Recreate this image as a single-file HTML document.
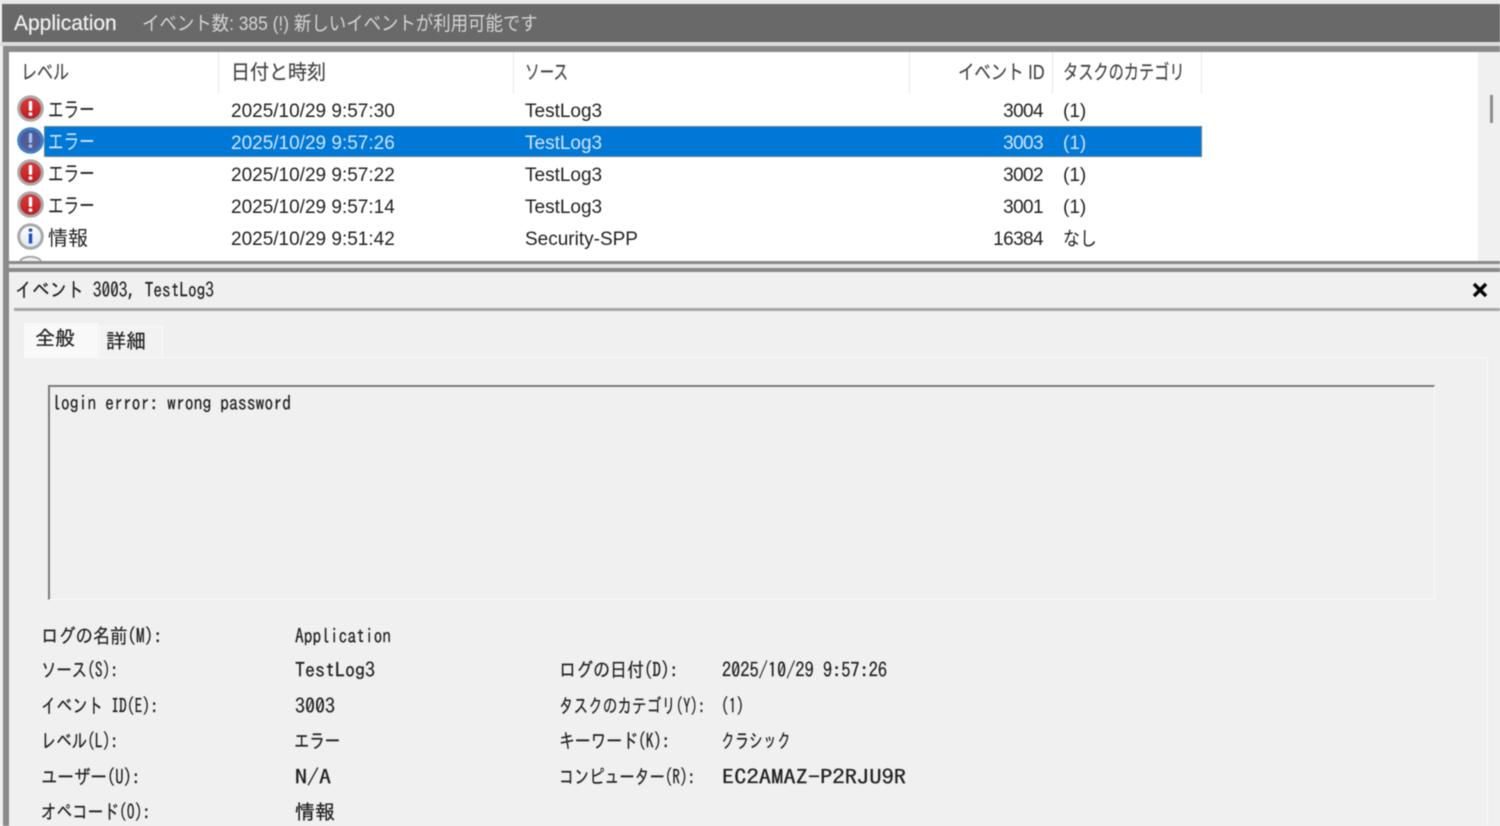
<!DOCTYPE html>
<html lang="ja"><head><meta charset="utf-8"><title>Application</title>
<style>
html,body{margin:0;padding:0;width:1500px;height:826px;overflow:hidden;background:#f0f0f0}
#r{position:relative;width:1500px;height:826px;overflow:hidden;filter:blur(.45px);font-family:"Liberation Sans","Noto Sans CJK JP",sans-serif;color:#222}
.b{position:absolute}
.t{position:absolute;white-space:nowrap;font-size:19px;line-height:24px;letter-spacing:0;transform-origin:0 50%}
.g{font-family:"IPAGothic","Liberation Sans",sans-serif;font-size:20px;line-height:24px;letter-spacing:0;color:#222;-webkit-text-stroke:.25px #222}
.w{color:#cfe4fa}
.h{color:#444;font-size:20px;-webkit-text-stroke:.2px #444}
.r{text-align:right;width:100px;letter-spacing:-.6px}
.e{transform:scaleX(.74)}
svg{position:absolute;overflow:visible}
</style></head><body><div id="r">
<div class="b" style="left:0;top:0;width:1500px;height:4px;background:#e8e8e8"></div>
<div class="b" style="left:2px;top:4px;width:1498px;height:38px;background:#696969"></div>
<div class="b" style="left:0;top:42px;width:1500px;height:4px;background:#dcdcdc"></div>
<div class="b" style="left:3px;top:46px;width:1497px;height:6px;background:#8a8a8a"></div>
<div class="b" style="left:3px;top:46px;width:6px;height:780px;background:#8a8a8a"></div>
<div class="b" style="left:9px;top:52px;width:1469px;height:209px;background:#fff"></div>
<div class="b" style="left:1478px;top:52px;width:22px;height:209px;background:#f0f0f0"></div>
<div class="b" style="left:1490px;top:95px;width:3px;height:28px;background:#8e8e8e"></div>
<div class="b" style="left:218px;top:52px;width:1px;height:41px;background:#e6e6e6"></div>
<div class="b" style="left:513px;top:52px;width:1px;height:41px;background:#e6e6e6"></div>
<div class="b" style="left:909px;top:52px;width:1px;height:41px;background:#e6e6e6"></div>
<div class="b" style="left:1052px;top:52px;width:1px;height:41px;background:#e6e6e6"></div>
<div class="b" style="left:1201px;top:52px;width:1px;height:41px;background:#e6e6e6"></div>
<div class="b" style="left:9px;top:261px;width:1491px;height:3px;background:#8a8a8a"></div>
<div class="b" style="left:9px;top:264px;width:1491px;height:4px;background:#e4e4e4"></div>
<div class="b" style="left:9px;top:268px;width:1491px;height:4px;background:#8a8a8a"></div>
<div class="b" style="left:44px;top:126px;width:1158px;height:31px;background:#0078d7;outline:1px dotted #c98a3a;outline-offset:-1px"></div>

<div class="t" style="left:14px;top:12px;color:#f0f0f0;font-size:21px;-webkit-text-stroke:.2px #f0f0f0">Application</div>
<div class="t" style="left:142px;top:12px;color:#d4d4d4;font-size:19.5px;transform:scaleX(.893)">イベント数: 385 (!) 新しいイベントが利用可能です</div>

<div class="t h" style="left:21px;top:61px;transform:scaleX(.8)">レベル</div>
<div class="t h" style="left:231px;top:61px;transform:scaleX(.95)">日付と時刻</div>
<div class="t h" style="left:525px;top:61px;transform:scaleX(.73)">ソース</div>
<div class="t h" style="left:958px;top:61px;transform:scaleX(.82)">イベント ID</div>
<div class="t h" style="left:1063px;top:61px;transform:scaleX(.76)">タスクのカテゴリ</div>

<svg style="left:0;top:0" width="60" height="270" viewBox="0 0 60 270">
<defs><linearGradient id="e" x1="0" y1="0" x2="0" y2="1"><stop offset="0" stop-color="#dc3c3e"/><stop offset="1" stop-color="#b81c20"/></linearGradient>
<linearGradient id="s" x1="0" y1="0" x2="0" y2="1"><stop offset="0" stop-color="#4a5a9c"/><stop offset="1" stop-color="#5a5f95"/></linearGradient>
<linearGradient id="n" x1="0" y1="0" x2="0" y2="1"><stop offset="0" stop-color="#fff"/><stop offset="1" stop-color="#dfe6f2"/></linearGradient></defs>
<circle cx="30.500" cy="108.500" r="11.800" fill="url(#e)" stroke="#a8a8a8" stroke-width="3"/><rect x="28.800" y="101" width="3.400" height="10" rx="1.500" fill="#fff"/><rect x="28.800" y="112.500" width="3.400" height="3.200" fill="#fff"/>
<circle cx="30.500" cy="140.500" r="11.800" fill="url(#s)" stroke="#3f7fc8" stroke-width="3"/><rect x="28.800" y="133" width="3.400" height="10" rx="1.500" fill="#9fc4ea"/><rect x="28.800" y="144.500" width="3.400" height="3.200" fill="#9fc4ea"/>
<circle cx="30.500" cy="172.500" r="11.800" fill="url(#e)" stroke="#a8a8a8" stroke-width="3"/><rect x="28.800" y="165" width="3.400" height="10" rx="1.500" fill="#fff"/><rect x="28.800" y="176.500" width="3.400" height="3.200" fill="#fff"/>
<circle cx="30.500" cy="204.500" r="11.800" fill="url(#e)" stroke="#a8a8a8" stroke-width="3"/><rect x="28.800" y="197" width="3.400" height="10" rx="1.500" fill="#fff"/><rect x="28.800" y="208.500" width="3.400" height="3.200" fill="#fff"/>
<circle cx="30.500" cy="236.500" r="11.800" fill="url(#n)" stroke="#a8a8a8" stroke-width="3"/><rect x="28.800" y="228.500" width="3.400" height="3.200" fill="#1c50b8"/><rect x="28.800" y="233.500" width="3.400" height="10" fill="#1c50b8"/>
<path d="M20 261a11 6 0 0 1 21 0" fill="#f2f2f2" stroke="#a8a8a8" stroke-width="2"/>
</svg>

<div class="t e" style="left:48px;top:99px;color:#222;font-size:21px">エラー</div>
<div class="t" style="left:231px;top:100px">2025/10/29 9:57:30</div>
<div class="t" style="left:525px;top:100px">TestLog3</div>
<div class="t r" style="left:943px;top:100px">3004</div>
<div class="t" style="left:1063px;top:100px">(1)</div>

<div class="t e w" style="left:48px;top:131px;font-size:21px">エラー</div>
<div class="t w" style="left:231px;top:132px">2025/10/29 9:57:26</div>
<div class="t w" style="left:525px;top:132px">TestLog3</div>
<div class="t w r" style="left:943px;top:132px">3003</div>
<div class="t w" style="left:1063px;top:132px">(1)</div>

<div class="t e" style="left:48px;top:163px;font-size:21px">エラー</div>
<div class="t" style="left:231px;top:164px">2025/10/29 9:57:22</div>
<div class="t" style="left:525px;top:164px">TestLog3</div>
<div class="t r" style="left:943px;top:164px">3002</div>
<div class="t" style="left:1063px;top:164px">(1)</div>

<div class="t e" style="left:48px;top:195px;font-size:21px">エラー</div>
<div class="t" style="left:231px;top:196px">2025/10/29 9:57:14</div>
<div class="t" style="left:525px;top:196px">TestLog3</div>
<div class="t r" style="left:943px;top:196px">3001</div>
<div class="t" style="left:1063px;top:196px">(1)</div>

<div class="t" style="left:48px;top:227px;font-size:20px">情報</div>
<div class="t" style="left:231px;top:228px">2025/10/29 9:51:42</div>
<div class="t" style="left:525px;top:228px">Security-SPP</div>
<div class="t r" style="left:943px;top:228px">16384</div>
<div class="t" style="left:1063px;top:228px;transform:scaleX(.89)">なし</div>

<div class="t g" style="left:15px;top:278px;transform:scaleX(.865)">イベント 3003, TestLog3</div>
<svg style="left:1472px;top:282px" width="16" height="16" viewBox="0 0 16 16"><path d="M2 2L14 14M14 2L2 14" stroke="#000" stroke-width="3.400"/></svg>
<div class="b" style="left:14px;top:308px;width:1486px;height:3px;background:#a6a6a6"></div>

<div class="b" style="left:28px;top:357px;width:1460px;height:469px;border-top:1px solid #f9f9f9;border-right:1px solid #f9f9f9;box-sizing:border-box"></div>
<div class="b" style="left:24px;top:323px;width:74px;height:35px;background:#f9f9f9"></div>
<div class="b" style="left:99px;top:326px;width:64px;height:30px;background:#f2f2f2;border:1px solid #f9f9f9;border-bottom:0;box-sizing:border-box"></div>
<div class="t g" style="left:35px;top:326px">全般</div>
<div class="t g" style="left:106px;top:329px">詳細</div>

<div class="b" style="left:48px;top:385px;width:1387px;height:215px;box-sizing:border-box;border-top:2px solid #7a7a7a;border-left:2px solid #7a7a7a;border-right:1px solid #fafafa;border-bottom:1px solid #fafafa"></div>
<div class="t g" style="left:52px;top:391px;transform:scaleX(.885)">login error: wrong password</div>

<div class="t g" style="left:41px;top:624px;transform:scaleX(.864)">ログの名前(M):</div>
<div class="t g" style="left:295px;top:624px;transform:scaleX(.873)">Application</div>
<div class="t g" style="left:41px;top:658px;transform:scaleX(.77)">ソース(S):</div>
<div class="t g" style="left:295px;top:658px">TestLog3</div>
<div class="t g" style="left:41px;top:694px;transform:scaleX(.78)">イベント ID(E):</div>
<div class="t g" style="left:295px;top:694px">3003</div>
<div class="t g" style="left:41px;top:729px;transform:scaleX(.77)">レベル(L):</div>
<div class="t g" style="left:294px;top:729px;transform:scaleX(.77)">エラー</div>
<div class="t g" style="left:41px;top:765px;transform:scaleX(.825)">ユーザー(U):</div>
<div class="t g" style="left:295px;top:765px;transform:scaleX(1.2)">N/A</div>
<div class="t g" style="left:41px;top:800px;transform:scaleX(.78)">オペコード(O):</div>
<div class="t g" style="left:295px;top:800px">情報</div>

<div class="t g" style="left:559px;top:658px;transform:scaleX(.85)">ログの日付(D):</div>
<div class="t g" style="left:722px;top:658px;transform:scaleX(.917)">2025/10/29 9:57:26</div>
<div class="t g" style="left:559px;top:694px;transform:scaleX(.73)">タスクのカテゴリ(Y):</div>
<div class="t g" style="left:721px;top:694px;transform:scaleX(.77)">(1)</div>
<div class="t g" style="left:559px;top:729px;transform:scaleX(.79)">キーワード(K):</div>
<div class="t g" style="left:721px;top:729px;transform:scaleX(.7)">クラシック</div>
<div class="t g" style="left:559px;top:765px;transform:scaleX(.756)">コンピューター(R):</div>
<div class="t g" style="left:722px;top:765px;transform:scaleX(1.227)">EC2AMAZ-P2RJU9R</div>
</div></body></html>
